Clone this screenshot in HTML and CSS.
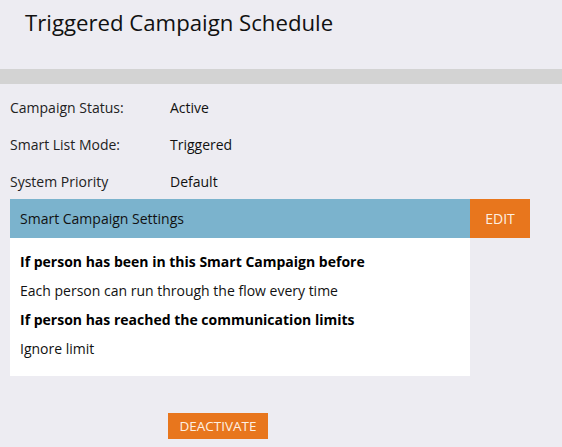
FILE: index.html
```html
<!DOCTYPE html>
<html>
<head>
<meta charset="utf-8">
<link rel="stylesheet" href="styles.css">
</head>
<body>
<div class="header">
  <h1 class="title">Triggered Campaign Schedule</h1>
</div>
<div class="divider"></div>
<div class="content">
  <div class="info">
    <div class="row"><span class="label">Campaign Status:</span><span class="value">Active</span></div>
    <div class="row"><span class="label">Smart List Mode:</span><span class="value">Triggered</span></div>
    <div class="row"><span class="label">System Priority</span><span class="value">Default</span></div>
  </div>
  <div class="settings">
    <div class="settings-head">
      <div class="settings-title">Smart Campaign Settings</div>
      <button class="edit">EDIT</button>
    </div>
    <div class="settings-body">
      <div class="line bold">If person has been in this Smart Campaign before</div>
      <div class="line">Each person can run through the flow every time</div>
      <div class="line bold">If person has reached the communication limits</div>
      <div class="line">Ignore limit</div>
    </div>
  </div>
  <div class="actions">
    <button class="deactivate">DEACTIVATE</button>
  </div>
</div>
</body>
</html>
```
FILE: styles.css
```css
html, body {
  margin: 0;
  padding: 0;
  background: #edecf2;
  font-family: "Open Sans", "Noto Sans", sans-serif;
  color: #111;
}
.header {
  height: 69px;
  padding: 7px 0 0 25px;
  box-sizing: border-box;
}
.title {
  margin: 0;
  font-size: 22.2px;
  line-height: 32px;
  font-weight: 400;
  color: #111;
}
.divider {
  height: 15px;
  background: #d3d3d3;
}
.content {
  padding: 14px 0 0 10px;
}
.info {
  display: flex;
  flex-direction: column;
  gap: 17px;
  margin-bottom: 7px;
}
.row {
  display: grid;
  grid-template-columns: 160px auto;
  font-size: 14px;
  line-height: 20px;
}
.label {
  color: #222;
}
.value {
  color: #111;
}
.settings-head {
  display: flex;
  height: 39px;
}
.settings-title {
  width: 460px;
  box-sizing: border-box;
  background: #7bb3cd;
  font-size: 14px;
  line-height: 39px;
  padding-left: 10px;
  color: #111;
}
.edit {
  width: 60px;
  height: 39px;
  border: none;
  margin: 0;
  padding: 0;
  background: #e8761d;
  color: #fdf0e2;
  font-family: "Open Sans", "Noto Sans", sans-serif;
  font-size: 14px;
}
.settings-body {
  width: 460px;
  box-sizing: border-box;
  background: #ffffff;
  padding: 9px 10px 13px;
}
.line {
  font-size: 14px;
  line-height: 29px;
  color: #111;
}
.line.bold {
  font-weight: 700;
  color: #000;
}
.actions {
  margin-top: 37px;
  padding-left: 158px;
}
.deactivate {
  width: 100px;
  height: 26px;
  border: none;
  margin: 0;
  padding: 0;
  background: #e8761d;
  color: #fdf0e2;
  font-family: "Open Sans", "Noto Sans", sans-serif;
  font-size: 13.5px;
}
```
